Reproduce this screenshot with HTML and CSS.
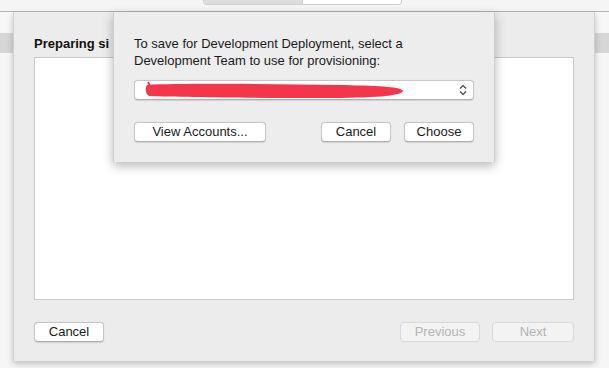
FILE: index.html
```html
<!DOCTYPE html>
<html lang="en">

<head>
    <meta charset="UTF-8">
    <meta name="viewport" content="width=device-width, initial-scale=1.0">
    <title>Development Team</title>
    <link rel="stylesheet" href="styles.css">
</head>

<body>
    <div class="titlebar">
        <div class="segmented">
            <span class="seg active"></span>
            <span class="seg"></span>
        </div>
    </div>

    <div class="stage">
        <div class="sheet">
            <div class="sheet-title">Preparing si</div>
            <div class="sheet-box"></div>
            <div class="sheet-footer">
                <button class="btn btn-cancel">Cancel</button>
                <div class="nav">
                    <button class="btn btn-prev" disabled>Previous</button>
                    <button class="btn btn-next" disabled>Next</button>
                </div>
            </div>
        </div>

        <div class="dialog">
            <p class="dialog-text">To save for Development Deployment, select a<br>Development Team to use for provisioning:</p>
            <div class="popup">
                <svg class="scribble" width="264" height="20" viewBox="0 0 264 20">
                    <path d="M4 4 C40 2 120 3 200 4 C240 5 258 6 260 10 C258 15 230 17 180 17 C110 17 40 16 6 15 C2 13 2 7 4 4 Z" fill="#f4364a"/>
                    <path d="M5 1 L7 5" stroke="#f4364a" stroke-width="2"/>
                </svg>
                <svg class="chevrons" width="8" height="12" viewBox="0 0 8 12">
                    <path d="M1 4.5 L4 1.5 L7 4.5 M1 7.5 L4 10.5 L7 7.5" fill="none" stroke="#444" stroke-width="1.2"/>
                </svg>
            </div>
            <div class="dialog-buttons">
                <button class="btn btn-accounts">View Accounts...</button>
                <div class="right">
                    <button class="btn btn-dcancel">Cancel</button>
                    <button class="btn btn-choose">Choose</button>
                </div>
            </div>
        </div>
    </div>
</body>

</html>
```

FILE: styles.css
```css
body {
    margin: 0;
    width: 609px;
    height: 368px;
    overflow: hidden;
    background-color: #f7f7f7;
    font-family: "Liberation Sans", Arial, sans-serif;
    font-size: 13px;
    color: #1a1a1a;
}

.titlebar {
    height: 11px;
    background-color: #f5f5f5;
    border-bottom: 1px solid #b4b4b4;
    display: flex;
    padding-left: 203px;
}

.segmented {
    display: flex;
    width: 197px;
    height: 4px;
    border: 1px solid #cfcfcf;
    border-top: none;
    border-radius: 0 0 4px 4px;
    overflow: hidden;
}

.seg {
    flex: 1;
    background-color: #ffffff;
}

.seg.active {
    background-color: #dcdcdc;
    border-right: 1px solid #cfcfcf;
}

.stage {
    position: relative;
    height: 356px;
    padding-left: 13px;
    background: linear-gradient(to bottom, #f7f7f7 0, #f7f7f7 21px, #d6d6d6 21px, #d6d6d6 41px, #f6f6f6 41px);
}

.sheet {
    width: 540px;
    height: 325px;
    padding: 24px 20px 0 20px;
    background-color: #ececec;
    border-left: 1px solid #d0d0d0;
    border-right: 1px solid #d0d0d0;
    box-shadow: 0 3px 6px rgba(0, 0, 0, 0.22);
    display: flex;
    flex-direction: column;
}

.sheet-title {
    height: 16px;
    line-height: 16px;
    font-size: 13px;
    font-weight: bold;
    color: #111;
    white-space: nowrap;
}

.sheet-box {
    margin-top: 5px;
    height: 241px;
    background-color: #ffffff;
    border: 1px solid #c9c9c9;
}

.sheet-footer {
    margin-top: 22px;
    display: flex;
    justify-content: space-between;
}

.nav {
    display: flex;
    gap: 12px;
}

.btn {
    height: 20px;
    padding: 0;
    font-family: "Liberation Sans", Arial, sans-serif;
    font-size: 13px;
    line-height: 18px;
    color: #1a1a1a;
    background-color: #ffffff;
    border: 1px solid #c6c6c6;
    border-bottom-color: #b0b0b0;
    border-radius: 4px;
    box-shadow: 0 0.5px 1px rgba(0, 0, 0, 0.12);
    text-align: center;
}

.btn:disabled {
    color: #b4b4b4;
    background-color: #f3f3f3;
    border-color: #d9d9d9;
    box-shadow: none;
}

.btn-cancel {
    width: 70px;
}

.btn-prev {
    width: 80px;
}

.btn-next {
    width: 82px;
}

.dialog {
    position: absolute;
    left: 113px;
    top: 0;
    width: 340px;
    height: 127px;
    padding: 23px 20px 0 20px;
    background-color: #ededed;
    border-left: 1px solid #cfcfcf;
    border-right: 1px solid #cfcfcf;
    box-shadow: 0 4px 10px rgba(0, 0, 0, 0.28);
}

.dialog-text {
    margin: 0;
    line-height: 17px;
    color: #1a1a1a;
}

.popup {
    position: relative;
    margin-top: 11px;
    height: 18px;
    background-color: #ffffff;
    border: 1px solid #c6c6c6;
    border-bottom-color: #b0b0b0;
    border-radius: 4px;
    box-shadow: 0 0.5px 1px rgba(0, 0, 0, 0.12);
}

.scribble {
    position: absolute;
    left: 8px;
    top: 0;
}

.chevrons {
    position: absolute;
    right: 6px;
    top: 3px;
}

.dialog-buttons {
    margin-top: 22px;
    display: flex;
    justify-content: space-between;
}

.dialog-buttons .right {
    display: flex;
    gap: 13px;
}

.btn-accounts {
    width: 132px;
}

.btn-dcancel {
    width: 70px;
}

.btn-choose {
    width: 70px;
}
```
